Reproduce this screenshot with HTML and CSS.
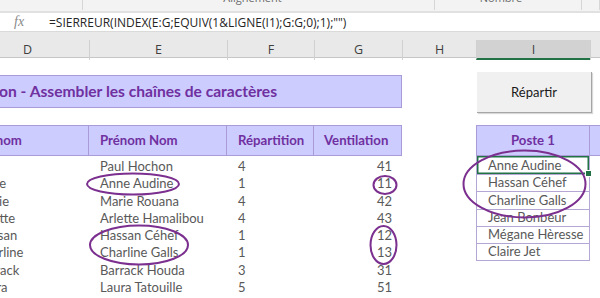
FILE: index.html
```html
<!DOCTYPE html>
<html lang="fr">
  <head>
    <title>Répartir - Assembler les chaînes de caractères</title>
    <meta charset="utf-8" />
    <meta name="viewport" content="width=device-width initial-scale=1" />
    <link rel="stylesheet" href="styles.css">
  </head>

  <body>
    <div class="ribbon">
      <div class="ribbon__group ribbon__group--first"></div>
      <div class="ribbon__group ribbon__group--align"><span>Alignement</span></div>
      <div class="ribbon__group ribbon__group--num"><span>Nombre</span></div>
      <div class="ribbon__group"></div>
    </div>

    <div class="formula">
      <div class="formula__fx">fx</div>
      <div class="formula__text">=SIERREUR(INDEX(E:G;EQUIV(1&amp;LIGNE(I1);G:G;0);1);"")</div>
    </div>

    <div class="colheads">
      <div class="colhead">D</div>
      <div class="colhead">E</div>
      <div class="colhead">F</div>
      <div class="colhead">G</div>
      <div class="colhead">H</div>
      <div class="colhead colhead--active">I</div>
      <div class="colhead"></div>
    </div>

    <main class="sheet">
      <div class="row row--blank"></div>
      <div class="row row--title">
        <div class="title">on - Assembler les chaînes de caractères</div>
      </div>
      <div class="row row--blank"></div>

      <div class="row row--head">
        <div class="head">Prénom</div>
        <div class="head">Prénom Nom</div>
        <div class="head">Répartition</div>
        <div class="head head--last">Ventilation</div>
        <div></div>
        <div class="head head--poste">Poste 1</div>
        <div class="head head--next"></div>
      </div>

      <div class="row">
        <div class="cell">Paul</div><div class="cell">Paul Hochon</div><div class="cell">4</div><div class="cell cell--num">41</div><div></div>
        <div class="cell poste poste--selected">Anne Audine</div><div></div>
      </div>
      <div class="row">
        <div class="cell">Anne</div><div class="cell">Anne Audine</div><div class="cell">1</div><div class="cell cell--num">11</div><div></div>
        <div class="cell poste">Hassan Céhef</div><div></div>
      </div>
      <div class="row">
        <div class="cell">Marie</div><div class="cell">Marie Rouana</div><div class="cell">4</div><div class="cell cell--num">42</div><div></div>
        <div class="cell poste">Charline Galls</div><div></div>
      </div>
      <div class="row">
        <div class="cell">Arlette</div><div class="cell">Arlette Hamalibou</div><div class="cell">4</div><div class="cell cell--num">43</div><div></div>
        <div class="cell poste">Jean Bonbeur</div><div></div>
      </div>
      <div class="row">
        <div class="cell">Hassan</div><div class="cell">Hassan Céhef</div><div class="cell">1</div><div class="cell cell--num">12</div><div></div>
        <div class="cell poste">Mégane Hèresse</div><div></div>
      </div>
      <div class="row">
        <div class="cell">Charline</div><div class="cell">Charline Galls</div><div class="cell">1</div><div class="cell cell--num">13</div><div></div>
        <div class="cell poste">Claire Jet</div><div></div>
      </div>
      <div class="row">
        <div class="cell">Barrack</div><div class="cell">Barrack Houda</div><div class="cell">3</div><div class="cell cell--num">31</div><div></div>
        <div></div><div></div>
      </div>
      <div class="row">
        <div class="cell">Laura</div><div class="cell">Laura Tatouille</div><div class="cell">5</div><div class="cell cell--num">51</div><div></div>
        <div></div><div></div>
      </div>
    </main>

    <button class="button">Répartir</button>

    <svg class="marks" width="600" height="298" viewBox="0 0 600 298">
      <ellipse cx="133" cy="184" rx="46" ry="10.5" />
      <ellipse cx="139" cy="245" rx="49" ry="19.5" />
      <ellipse cx="385" cy="185" rx="11.5" ry="9" />
      <ellipse cx="383.5" cy="245" rx="13" ry="19" />
      <ellipse cx="524.5" cy="184" rx="61" ry="33.5" />
    </svg>
  </body>
</html>
```

FILE: styles.css
```css
* {
  box-sizing: border-box;
}

html,
body {
  margin: 0;
  padding: 0;
  width: 600px;
  height: 298px;
  overflow: hidden;
  background: #ffffff;
}

body {
  position: relative;
  font-family: Lato, "Noto Sans", sans-serif;
}

/* ribbon bottom */
.ribbon {
  display: flex;
  height: 13px;
  background: #f3f3f3;
  border-bottom: 2px solid #e1e1e1;
  overflow: hidden;
}

.ribbon__group {
  flex: 1;
  border-right: 1px solid #d6d6d6;
  height: 10px;
  text-align: center;
  font-family: "Open Sans", sans-serif;
  font-size: 11px;
  color: #6a6a6a;
  line-height: 11px;
}

.ribbon__group span {
  position: relative;
  top: -8px;
}

.ribbon__group--first {
  flex: 0 0 83px;
}

.ribbon__group--align {
  flex: 0 0 352px;
  padding-right: 12px;
}

.ribbon__group--num {
  flex: 0 0 147px;
  padding-right: 14px;
}

/* formula bar */
.formula {
  display: flex;
  height: 19px;
  background: #ffffff;
  border-bottom: 1px solid #dadada;
}

.formula__fx {
  width: 40px;
  padding-left: 14px;
  font-family: "Liberation Serif", serif;
  font-style: italic;
  font-size: 14px;
  line-height: 18px;
  color: #8a8a8a;
}

.formula__text {
  padding-left: 9px;
  font-family: "Open Sans", sans-serif;
  font-size: 12px;
  line-height: 19px;
  color: #262626;
  white-space: nowrap;
}

/* column letters */
.colheads {
  display: grid;
  grid-template-columns: 124px 138px 87px 88px 74px 114px 1fr;
  margin-left: -35px;
  height: 26px;
  padding-top: 8px;
  background: #e9e9e9;
  border-bottom: 1px solid #c6c6c6;
}

.colhead {
  border-left: 1px solid #d0d0d0;
  text-align: center;
  font-family: "Open Sans", sans-serif;
  font-size: 12.5px;
  line-height: 17px;
  padding-top: 1px;
  color: #404040;
}

.colhead--active {
  background: #d2d2d2;
  border-bottom: 2px solid #217346;
}

/* sheet */
.sheet {
  margin-left: -35px;
}

.row {
  display: grid;
  grid-template-columns: 124px 138px 87px 88px 74px 114px 1fr;
  height: 17.25px;
}

.row--blank {
  height: 17px;
}

.row--title {
  height: 33px;
}

.title {
  grid-column: 1 / 5;
  background: #ccccff;
  border-top: 1px solid #a99bd8;
  border-bottom: 1px solid #a99bd8;
  border-right: 1px solid #a99bd8;
  padding-left: 34px;
  font-size: 15.6px;
  font-weight: 700;
  line-height: 31px;
  color: #7030a0;
  white-space: nowrap;
  overflow: hidden;
}

.row--head {
  height: 31px;
}

.head {
  background: #ccccff;
  border-top: 1px solid #a99bd8;
  border-bottom: 1px solid #a99bd8;
  border-right: 1px solid #a99bd8;
  padding-left: 11px;
  font-size: 13.2px;
  font-weight: 700;
  line-height: 29px;
  color: #7030a0;
  white-space: nowrap;
}

.head--last {
  padding-left: 10px;
}

.head--poste {
  border-left: 1px solid #a99bd8;
  padding-left: 0;
  text-align: center;
}

.head--next {
  border-right: none;
}

.cell {
  padding-left: 11px;
  font-size: 13px;
  line-height: 17px;
  padding-top: 2px;
  color: #595959;
  white-space: nowrap;
}

.cell--num {
  padding-left: 0;
  padding-right: 10px;
  text-align: right;
}

.poste {
  border-left: 1px solid #b4a7d6;
  border-right: 1px solid #b4a7d6;
  border-bottom: 1px solid #b4a7d6;
  padding-top: 1px;
}

.poste--selected {
  position: relative;
  box-shadow: inset 0 0 0 1.5px #217346;
}

.poste--selected::after {
  content: "";
  position: absolute;
  right: -3px;
  bottom: -3px;
  width: 5px;
  height: 5px;
  background: #217346;
  border: 1px solid #ffffff;
}

/* shape over the cells */
.button {
  all: unset;
  position: absolute;
  left: 477px;
  top: 72px;
  width: 114px;
  height: 40px;
  background: #f0f0f0;
  border-right: 1px solid #a6a6a6;
  border-bottom: 1px solid #a6a6a6;
  box-shadow: 1px 1px 1px rgba(0, 0, 0, 0.15);
  text-align: center;
  font-size: 13px;
  line-height: 40px;
  color: #1a1a1a;
}

.marks {
  position: absolute;
  left: 0;
  top: 0;
  pointer-events: none;
}

.marks ellipse {
  fill: none;
  stroke: #7b2f8f;
  stroke-width: 2;
}
```
